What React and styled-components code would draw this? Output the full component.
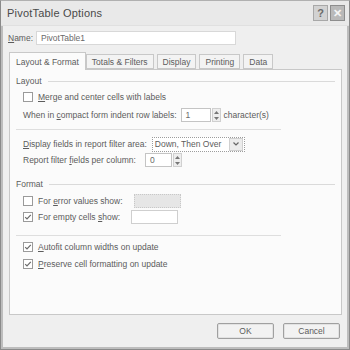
import React from "react";
import styled, { createGlobalStyle } from "styled-components";

const Global = createGlobalStyle`
  html, body { margin: 0; padding: 0; background: #ededed; }
  body { font-family: "Liberation Sans", Arial, sans-serif; }
`;

const Window = styled.div`
  width: 350px;
  height: 350px;
  box-sizing: border-box;
  border: 1px solid #8a8a8a;
  border-top-color: #b0b0b0;
  box-shadow: inset 2px 0 0 #bdbdbd, inset -2px 0 0 #bdbdbd, inset 0 -2px 0 #bdbdbd;
  background: #efefef;
  display: flex;
  flex-direction: column;
  color: #5c5c5c;
  font-size: 8.5px;
  overflow: hidden;
`;

const TitleBar = styled.div`
  height: 24px;
  flex: none;
  display: flex;
  align-items: center;
  padding: 0 4px 0 6px;
  background: #e9e9e9;
  border-bottom: 1px solid #e0e0e0;
`;

const Title = styled.div`
  flex: 1;
  font-size: 11px;
  color: #4a4a4a;
  letter-spacing: 0.2px;
`;

const CapButton = styled.div`
  width: 15px;
  height: 16px;
  box-sizing: border-box;
  margin-left: 2px;
  border: 1px solid ${(p) => (p.dark ? "#8d8d8d" : "#a8a8a8")};
  background: ${(p) => (p.dark ? "#b9b9b9" : "#d2d2d2")};
  color: ${(p) => (p.dark ? "#f4f4f4" : "#6a6a6a")};
  display: flex;
  align-items: center;
  justify-content: center;
  font-size: 11px;
  font-weight: bold;
`;

const Body = styled.div`
  flex: 1;
  display: flex;
  flex-direction: column;
  padding: 4px 8px 0 7px;
`;

const NameRow = styled.div`
  display: flex;
  align-items: center;
  height: 15px;
  gap: 3px;
`;

const TextBox = styled.div`
  width: ${(p) => p.w}px;
  height: ${(p) => p.h || 14}px;
  box-sizing: border-box;
  border: 1px ${(p) => (p.dotted ? "dotted" : "solid")} ${(p) => p.bc || "#c4c4c4"};
  background: ${(p) => p.bg || "#ffffff"};
  display: flex;
  align-items: center;
  padding-left: 4px;
  color: #6a6a6a;
`;

const Tabs = styled.div`
  display: flex;
  align-items: flex-end;
  margin-top: 6px;
  padding-left: 1px;
  height: 18px;
  position: relative;
  z-index: 1;
`;

const Tab = styled.div`
  height: ${(p) => (p.active ? 18 : 15)}px;
  box-sizing: border-box;
  padding: 0 ${(p) => p.px || 5}px;
  margin-right: ${(p) => (p.active ? 0 : 3)}px;
  border: 1px solid #c8c8c8;
  border-bottom: ${(p) => (p.active ? "none" : "1px solid #c8c8c8")};
  background: ${(p) => (p.active ? "#fbfbfb" : "#f3f3f3")};
  display: flex;
  align-items: center;
  color: #5c5c5c;
  margin-bottom: ${(p) => (p.active ? -1 : 0)}px;
`;

const Panel = styled.div`
  margin-left: 1px;
  width: 333px;
  height: 246px;
  box-sizing: border-box;
  border: 1px solid #c8c8c8;
  background: #fbfbfb;
  padding: 5px 6px 0 6px;
  display: flex;
  flex-direction: column;
`;

const SectionHeader = styled.div`
  height: 12px;
  margin-top: ${(p) => p.mt || 0}px;
  display: flex;
  align-items: center;
  gap: 6px;
  &::after {
    content: "";
    flex: 1;
    height: 0;
    border-top: 1px solid #dadada;
  }
`;

const Row = styled.div`
  height: ${(p) => p.h || 16}px;
  margin-top: ${(p) => p.mt || 0}px;
  padding-left: 7px;
  display: flex;
  align-items: center;
  white-space: nowrap;
`;

const Box = styled.div`
  width: 10px;
  height: 10px;
  box-sizing: border-box;
  border: 1px solid #9a9a9a;
  background: #fff;
  margin-right: 5px;
  display: flex;
  align-items: center;
  justify-content: center;
  flex: none;
`;

const Separator = styled.div`
  margin: ${(p) => p.m};
  width: 265px;
  border-top: 1px solid #dedede;
`;

const Spinner = styled.div`
  width: 9px;
  height: 14px;
  margin-left: 1px;
  box-sizing: border-box;
  border: 1px solid #d0d0d0;
  background: #eeeeee;
  display: flex;
  flex-direction: column;
  align-items: center;
  justify-content: space-around;
`;

const Select = styled.div`
  width: 93px;
  height: 15px;
  box-sizing: border-box;
  border: 1px dotted #9c9c9c;
  background: #fff;
  display: flex;
  align-items: center;
  padding-left: 2px;
  margin-left: 5px;
  color: #5c5c5c;
`;

const SelectText = styled.span`
  flex: 1;
`;

const DropBtn = styled.div`
  width: 12px;
  height: 11px;
  margin-right: 1px;
  border: 1px solid #d0d0d0;
  background: #ececec;
  display: flex;
  align-items: center;
  justify-content: center;
`;

const U = styled.span`
  text-decoration: underline;
`;

const Spacer = styled.div`
  width: ${(p) => p.w}px;
  flex: none;
`;

const Footer = styled.div`
  display: flex;
  justify-content: flex-end;
  gap: 9px;
  padding: 8px 1px 0 0;
`;

const Button = styled.div`
  width: 57px;
  height: 16px;
  box-sizing: border-box;
  border: 1px solid #a0a0a0;
  border-radius: 2px;
  background: #f2f2f2;
  box-shadow: inset 0 0 0 1px #e2e2e2;
  display: flex;
  align-items: center;
  justify-content: center;
  color: #5c5c5c;
`;

const Check = () => (
  <svg width="8" height="8" viewBox="0 0 8 8">
    <path d="M1.2 4.2 L3 6 L6.8 1.8" fill="none" stroke="#6a6a6a" strokeWidth="1.2" />
  </svg>
);

const Arrows = () => (
  <Spinner>
    <svg width="5" height="3" viewBox="0 0 5 3"><path d="M0 3 L2.5 0 L5 3Z" fill="#777" /></svg>
    <svg width="5" height="3" viewBox="0 0 5 3"><path d="M0 0 L2.5 3 L5 0Z" fill="#777" /></svg>
  </Spinner>
);

const CheckRow = ({ checked, children, mt }) => (
  <Row mt={mt}>
    <Box>{checked && <Check />}</Box>
    {children}
  </Row>
);

export default function App() {
  return (
    <>
      <Global />
      <Window>
        <TitleBar>
          <Title>PivotTable Options</Title>
          <CapButton>?</CapButton>
          <CapButton dark>✕</CapButton>
        </TitleBar>
        <Body>
          <NameRow>
            <span><U>N</U>ame:</span>
            <TextBox w={200} bc="#d8d8d8">PivotTable1</TextBox>
          </NameRow>
          <Tabs>
            <Tab active px={6}>Layout &amp; Format</Tab>
            <Tab>Totals &amp; Filters</Tab>
            <Tab>Display</Tab>
            <Tab>Printing</Tab>
            <Tab>Data</Tab>
          </Tabs>
          <Panel>
            <SectionHeader>Layout</SectionHeader>
            <CheckRow mt={2}><span><U>M</U>erge and center cells with labels</span></CheckRow>
            <Row mt={2}>
              <span>When in <U>c</U>ompact form indent row labels:</span>
              <Spacer w={4} />
              <TextBox w={30}>1</TextBox>
              <Arrows />
              <Spacer w={3} />
              <span>character(s)</span>
            </Row>
            <Separator m="6px 0 6px 0" />
            <Row>
              <span><U>D</U>isplay fields in report filter area:</span>
              <Select>
                <SelectText>Down, Then Over</SelectText>
                <DropBtn>
                  <svg width="6" height="4" viewBox="0 0 6 4"><path d="M0.5 0.5 L3 3 L5.5 0.5" fill="none" stroke="#666" strokeWidth="1.2" /></svg>
                </DropBtn>
              </Select>
            </Row>
            <Row>
              <span>Report filter <U>f</U>ields per column:</span>
              <Spacer w={9} />
              <TextBox w={27}>0</TextBox>
              <Arrows />
            </Row>
            <SectionHeader mt={10}>Format</SectionHeader>
            <CheckRow mt={3}>
              <span>For <U>e</U>rror values show:</span>
              <Spacer w={11} />
              <TextBox w={47} dotted bg="#e6e6e6" bc="#c8c8c8" />
            </CheckRow>
            <CheckRow checked>
              <span>For empty cells <U>s</U>how:</span>
              <Spacer w={11} />
              <TextBox w={47} bc="#cfcfcf" />
            </CheckRow>
            <Separator m="10px 0 3px 0" />
            <CheckRow checked><span><U>A</U>utofit column widths on update</span></CheckRow>
            <CheckRow checked mt={1}><span><U>P</U>reserve cell formatting on update</span></CheckRow>
          </Panel>
          <Footer>
            <Button>OK</Button>
            <Button>Cancel</Button>
          </Footer>
        </Body>
      </Window>
    </>
  );
}
